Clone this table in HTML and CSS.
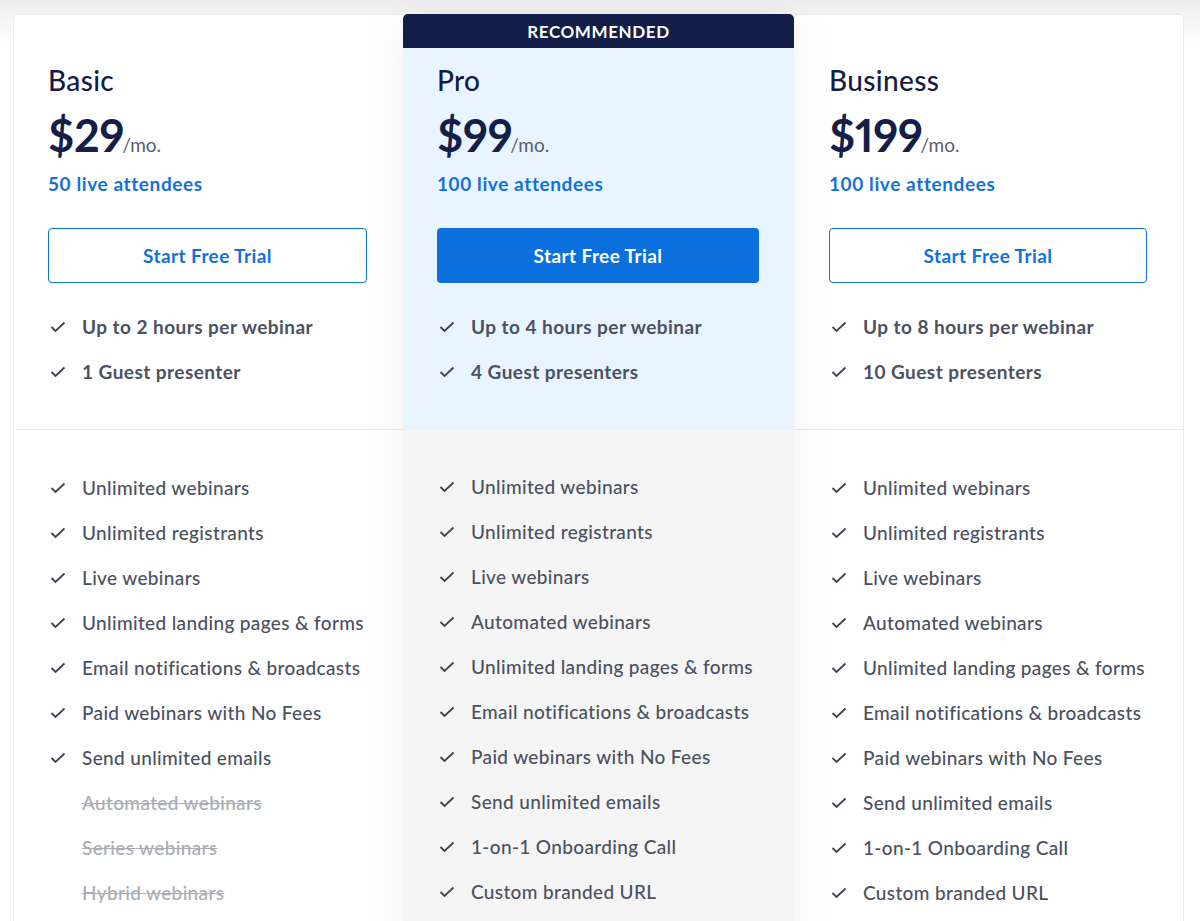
FILE: index.html
```html
<!DOCTYPE html>
<html lang="en">
<head>
    <meta charset="UTF-8">
    <title>Pricing</title>
    <link rel="stylesheet" href="styles.css">
</head>
<body>
    <div class="pricing">
        <div class="plan">
            <div class="plan-top">
                <h2 class="plan-name">Basic</h2>
                <div class="plan-price"><strong>$29</strong><span>/mo.</span></div>
                <div class="plan-attendees">50 live attendees</div>
                <a href="#" class="btn btn-outline">Start Free Trial</a>
                <ul class="features strong">
                    <li><svg class="check" viewBox="0 0 16 12"><polyline points="1.5,6 5.5,10 14.5,1.5"/></svg>Up to 2 hours per webinar</li>
                    <li><svg class="check" viewBox="0 0 16 12"><polyline points="1.5,6 5.5,10 14.5,1.5"/></svg>1 Guest presenter</li>
                </ul>
            </div>
            <div class="plan-bottom">
                <ul class="features">
                    <li><svg class="check" viewBox="0 0 16 12"><polyline points="1.5,6 5.5,10 14.5,1.5"/></svg>Unlimited webinars</li>
                    <li><svg class="check" viewBox="0 0 16 12"><polyline points="1.5,6 5.5,10 14.5,1.5"/></svg>Unlimited registrants</li>
                    <li><svg class="check" viewBox="0 0 16 12"><polyline points="1.5,6 5.5,10 14.5,1.5"/></svg>Live webinars</li>
                    <li><svg class="check" viewBox="0 0 16 12"><polyline points="1.5,6 5.5,10 14.5,1.5"/></svg>Unlimited landing pages &amp; forms</li>
                    <li><svg class="check" viewBox="0 0 16 12"><polyline points="1.5,6 5.5,10 14.5,1.5"/></svg>Email notifications &amp; broadcasts</li>
                    <li><svg class="check" viewBox="0 0 16 12"><polyline points="1.5,6 5.5,10 14.5,1.5"/></svg>Paid webinars with No Fees</li>
                    <li><svg class="check" viewBox="0 0 16 12"><polyline points="1.5,6 5.5,10 14.5,1.5"/></svg>Send unlimited emails</li>
                    <li class="missing">Automated webinars</li>
                    <li class="missing">Series webinars</li>
                    <li class="missing">Hybrid webinars</li>
                </ul>
            </div>
        </div>

        <div class="plan plan-featured">
            <div class="plan-badge">RECOMMENDED</div>
            <div class="plan-top">
                <h2 class="plan-name">Pro</h2>
                <div class="plan-price"><strong>$99</strong><span>/mo.</span></div>
                <div class="plan-attendees">100 live attendees</div>
                <a href="#" class="btn btn-solid">Start Free Trial</a>
                <ul class="features strong">
                    <li><svg class="check" viewBox="0 0 16 12"><polyline points="1.5,6 5.5,10 14.5,1.5"/></svg>Up to 4 hours per webinar</li>
                    <li><svg class="check" viewBox="0 0 16 12"><polyline points="1.5,6 5.5,10 14.5,1.5"/></svg>4 Guest presenters</li>
                </ul>
            </div>
            <div class="plan-bottom">
                <ul class="features">
                    <li><svg class="check" viewBox="0 0 16 12"><polyline points="1.5,6 5.5,10 14.5,1.5"/></svg>Unlimited webinars</li>
                    <li><svg class="check" viewBox="0 0 16 12"><polyline points="1.5,6 5.5,10 14.5,1.5"/></svg>Unlimited registrants</li>
                    <li><svg class="check" viewBox="0 0 16 12"><polyline points="1.5,6 5.5,10 14.5,1.5"/></svg>Live webinars</li>
                    <li><svg class="check" viewBox="0 0 16 12"><polyline points="1.5,6 5.5,10 14.5,1.5"/></svg>Automated webinars</li>
                    <li><svg class="check" viewBox="0 0 16 12"><polyline points="1.5,6 5.5,10 14.5,1.5"/></svg>Unlimited landing pages &amp; forms</li>
                    <li><svg class="check" viewBox="0 0 16 12"><polyline points="1.5,6 5.5,10 14.5,1.5"/></svg>Email notifications &amp; broadcasts</li>
                    <li><svg class="check" viewBox="0 0 16 12"><polyline points="1.5,6 5.5,10 14.5,1.5"/></svg>Paid webinars with No Fees</li>
                    <li><svg class="check" viewBox="0 0 16 12"><polyline points="1.5,6 5.5,10 14.5,1.5"/></svg>Send unlimited emails</li>
                    <li><svg class="check" viewBox="0 0 16 12"><polyline points="1.5,6 5.5,10 14.5,1.5"/></svg>1-on-1 Onboarding Call</li>
                    <li><svg class="check" viewBox="0 0 16 12"><polyline points="1.5,6 5.5,10 14.5,1.5"/></svg>Custom branded URL</li>
                </ul>
            </div>
        </div>

        <div class="plan plan-last">
            <div class="plan-top">
                <h2 class="plan-name">Business</h2>
                <div class="plan-price"><strong>$199</strong><span>/mo.</span></div>
                <div class="plan-attendees">100 live attendees</div>
                <a href="#" class="btn btn-outline">Start Free Trial</a>
                <ul class="features strong">
                    <li><svg class="check" viewBox="0 0 16 12"><polyline points="1.5,6 5.5,10 14.5,1.5"/></svg>Up to 8 hours per webinar</li>
                    <li><svg class="check" viewBox="0 0 16 12"><polyline points="1.5,6 5.5,10 14.5,1.5"/></svg>10 Guest presenters</li>
                </ul>
            </div>
            <div class="plan-bottom">
                <ul class="features">
                    <li><svg class="check" viewBox="0 0 16 12"><polyline points="1.5,6 5.5,10 14.5,1.5"/></svg>Unlimited webinars</li>
                    <li><svg class="check" viewBox="0 0 16 12"><polyline points="1.5,6 5.5,10 14.5,1.5"/></svg>Unlimited registrants</li>
                    <li><svg class="check" viewBox="0 0 16 12"><polyline points="1.5,6 5.5,10 14.5,1.5"/></svg>Live webinars</li>
                    <li><svg class="check" viewBox="0 0 16 12"><polyline points="1.5,6 5.5,10 14.5,1.5"/></svg>Automated webinars</li>
                    <li><svg class="check" viewBox="0 0 16 12"><polyline points="1.5,6 5.5,10 14.5,1.5"/></svg>Unlimited landing pages &amp; forms</li>
                    <li><svg class="check" viewBox="0 0 16 12"><polyline points="1.5,6 5.5,10 14.5,1.5"/></svg>Email notifications &amp; broadcasts</li>
                    <li><svg class="check" viewBox="0 0 16 12"><polyline points="1.5,6 5.5,10 14.5,1.5"/></svg>Paid webinars with No Fees</li>
                    <li><svg class="check" viewBox="0 0 16 12"><polyline points="1.5,6 5.5,10 14.5,1.5"/></svg>Send unlimited emails</li>
                    <li><svg class="check" viewBox="0 0 16 12"><polyline points="1.5,6 5.5,10 14.5,1.5"/></svg>1-on-1 Onboarding Call</li>
                    <li><svg class="check" viewBox="0 0 16 12"><polyline points="1.5,6 5.5,10 14.5,1.5"/></svg>Custom branded URL</li>
                </ul>
            </div>
        </div>
    </div>
</body>
</html>
```

FILE: styles.css
```css
* {
    margin: 0;
    padding: 0;
    box-sizing: border-box;
}

body {
    font-family: Lato, 'Liberation Sans', sans-serif;
    background: linear-gradient(#eeeeee 0, #ffffff 45px) no-repeat;
    background-color: white;
    color: #4b5160;
    letter-spacing: 0.35px;
    overflow: hidden;
}

.pricing {
    margin: 14px 0 0 13px;
    width: 1171px;
    height: 940px;
    display: grid;
    grid-template-columns: 389px 391px 1fr;
    background-color: white;
    border: 1px solid #ebebeb;
    border-radius: 5px;
}

.plan-top {
    height: 415px;
    padding: 48px 36px 0 34px;
    border-bottom: 1px solid #ebebeb;
}

.plan-last .plan-top {
    padding-left: 35px;
}

.plan-bottom {
    padding: 35px 0 0 34px;
}

.plan-last .plan-bottom {
    padding-left: 35px;
}

.plan-name {
    font-size: 28px;
    line-height: 34px;
    font-weight: 500;
    color: #131c45;
}

.plan-price {
    margin-top: 14px;
    display: flex;
    align-items: baseline;
    color: #141e48;
}

.plan-price strong {
    font-size: 45px;
    line-height: 48px;
    font-weight: 700;
    letter-spacing: -0.3px;
    font-variant-numeric: proportional-nums;
}

.plan-price span {
    margin-left: -2px;
    font-size: 19px;
    color: #5a5f69;
    letter-spacing: 0;
}

.plan-attendees {
    margin-top: 13px;
    font-size: 19px;
    line-height: 24px;
    font-weight: 700;
    letter-spacing: 0.6px;
    color: #1271d9;
}

.btn {
    margin-top: 32px;
    display: flex;
    align-items: center;
    justify-content: center;
    height: 55px;
    border-radius: 4px;
    font-size: 19px;
    font-weight: 700;
    letter-spacing: 0.4px;
    text-decoration: none;
}

.btn-outline {
    border: 1px solid #1271d9;
    color: #1271d9;
    background-color: white;
}

.btn-solid {
    background-color: #0b6fdd;
    color: white;
}

.features {
    list-style: none;
}

.plan-top .features {
    margin-top: 21px;
}

.features li {
    display: flex;
    align-items: center;
    height: 45px;
    font-size: 19px;
    font-weight: 500;
}

.features.strong li {
    font-weight: 700;
    letter-spacing: 0.45px;
}

.check {
    width: 16px;
    height: 12px;
    margin: 0 16px 0 2px;
    flex-shrink: 0;
    fill: none;
    stroke: #3c4350;
    stroke-width: 1.8;
}

.features li.missing {
    padding-left: 34px;
    color: #a9adb4;
    text-decoration: line-through;
}

/* featured plan */
.plan-featured {
    position: relative;
    z-index: 1;
    margin-top: -1px;
    background-color: #f5f5f5;
    box-shadow: 0 0 50px rgba(0, 0, 0, 0.06);
    border-radius: 5px 5px 0 0;
}

.plan-badge {
    height: 34px;
    display: flex;
    align-items: center;
    justify-content: center;
    background-color: #131e4a;
    color: white;
    font-size: 17px;
    font-weight: 700;
    letter-spacing: 0.6px;
    border-radius: 5px 5px 0 0;
}

.plan-featured .plan-top {
    height: 382px;
    padding-top: 15px;
    padding-right: 35px;
    background-color: #e8f4ff;
    border-bottom: none;
}

.plan-featured .plan-bottom {
    padding-top: 34px;
}
```
